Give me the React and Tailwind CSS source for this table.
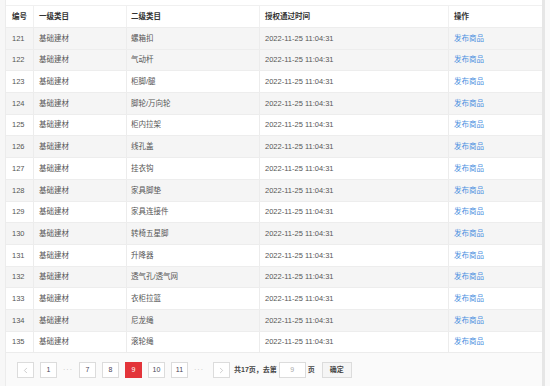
import { ChevronLeft, ChevronRight } from "lucide-react";

const rows = [
  [121, "螺箱扣"],
  [122, "气动杆"],
  [123, "柜脚/腿"],
  [124, "脚轮/万向轮"],
  [125, "柜内拉架"],
  [126, "线孔盖"],
  [127, "挂衣钩"],
  [128, "家具脚垫"],
  [129, "家具连接件"],
  [130, "转椅五星脚"],
  [131, "升降器"],
  [132, "透气孔/透气网"],
  [133, "衣柜拉篮"],
  [134, "尼龙绳"],
  [135, "滚轮绳"],
];

const cols = "grid grid-cols-[27px_93px_133px_189px_1fr]";

function PageBtn({ children, active }) {
  return (
    <div
      className={`w-[17px] h-[16px] flex items-center justify-center border text-[7px] ${
        active ? "bg-[#e3343a] border-[#e3343a] text-white" : "bg-white border-[#dcdcdc] text-[#4a4458]"
      }`}
    >
      {children}
    </div>
  );
}

export default function App() {
  return (
    <div
      className="w-[550px] h-[386px] bg-white flex overflow-hidden"
      style={{ fontFamily: '"Liberation Sans", "Noto Sans CJK SC", sans-serif' }}
    >
      <div className="w-[6px] bg-[#f7f7f7] border-r border-[#ececec]" />
      <div className="w-[536px] flex flex-col pt-[5px]">
        <div className="border-t border-[#f0f0f0] text-[7.5px] text-[#555]">
          <div className={`${cols} h-[21px] items-center font-semibold text-[#333] bg-white`}>
            <div className="pl-[6px] h-full flex items-center">编号</div>
            <div className="pl-[5px] h-full flex items-center border-l border-[#f0f0f0]">一级类目</div>
            <div className="pl-[4px] h-full flex items-center border-l border-[#f0f0f0]">二级类目</div>
            <div className="pl-[5px] h-full flex items-center border-l border-[#f0f0f0]">授权通过时间</div>
            <div className="pl-[5px] h-full flex items-center border-l border-[#f0f0f0]">操作</div>
          </div>
          {rows.map(([id, name], i) => (
            <div
              key={id}
              className={`${cols} h-[21.7px] items-center border-t border-[#ededed] ${
                i === 0 || i % 2 === 1 ? "bg-[#f5f5f5]" : "bg-white"
              }`}
            >
              <div className="pl-[6px] h-full flex items-center">{id}</div>
              <div className="pl-[5px] h-full flex items-center border-l border-[#ececec]">基础建材</div>
              <div className="pl-[4px] h-full flex items-center border-l border-[#ececec]">{name}</div>
              <div className="pl-[5px] h-full flex items-center border-l border-[#ececec]">2022-11-25 11:04:31</div>
              <div className="pl-[5px] h-full flex items-center border-l border-[#ececec] text-[#4a8fe0]">发布商品</div>
            </div>
          ))}
        </div>
        <div className="flex-1 bg-[#fafafa] border-t border-[#ececec] flex items-start pt-[9px] pl-[11px] text-[7px] text-[#444]">
          <div className="flex items-center gap-[6px]">
            <PageBtn>
              <ChevronLeft size={9} strokeWidth={1.5} className="text-[#aaa]" />
            </PageBtn>
            <PageBtn>1</PageBtn>
            <span className="w-[10px] text-[#bbb] tracking-[1px]">···</span>
            <PageBtn>7</PageBtn>
            <PageBtn>8</PageBtn>
            <PageBtn active>9</PageBtn>
            <PageBtn>10</PageBtn>
            <PageBtn>11</PageBtn>
            <span className="w-[13px] text-[#bbb] tracking-[1px]">···</span>
            <PageBtn>
              <ChevronRight size={9} strokeWidth={1.5} className="text-[#aaa]" />
            </PageBtn>
          </div>
          <div className="flex items-center h-[16px] ml-[4px]">
            <span className="font-semibold text-[#444]">共17页，去第</span>
            <div className="ml-[2px] w-[27px] h-[16px] bg-white border border-[#dcdcdc] flex items-center justify-center text-[#aaa]">
              9
            </div>
            <span className="ml-[2px] font-semibold">页</span>
            <div className="ml-[7px] w-[30px] h-[16px] bg-[#f5f5f5] border border-[#dcdcdc] flex items-center justify-center font-semibold text-[#444]">
              确定
            </div>
          </div>
        </div>
      </div>
      <div className="w-[3px] bg-[#e6e6e6]" />
      <div className="flex-1 bg-[#fafafa]" />
    </div>
  );
}
